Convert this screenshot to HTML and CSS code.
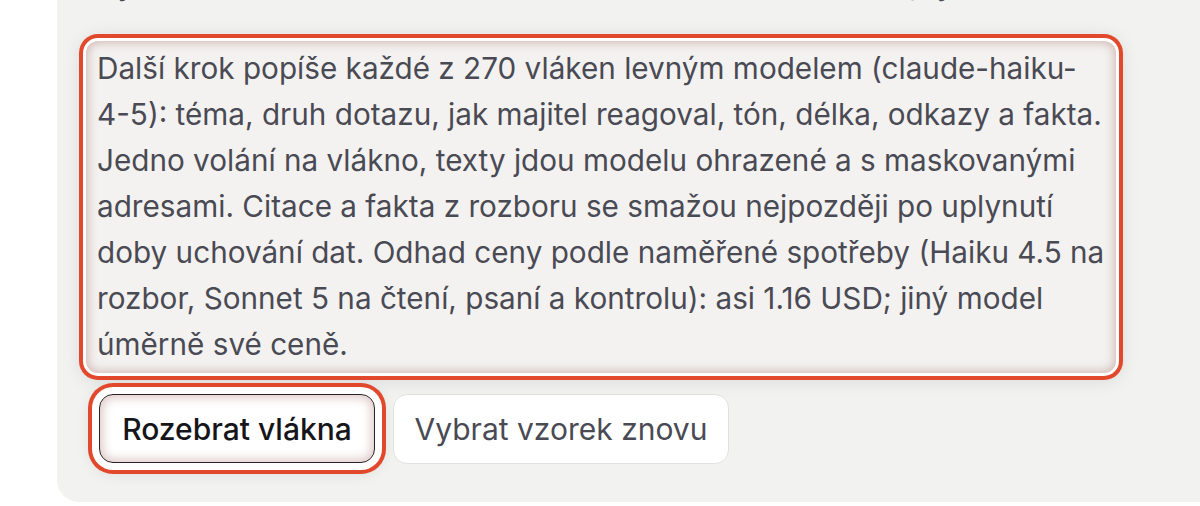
FILE: index.html
```html
<!DOCTYPE html>
<html lang="cs">
<head>
<meta charset="utf-8">
<title>Rozbor vláken</title>
<link rel="stylesheet" href="styles.css">
</head>
<body>
<main class="card">
  <p class="lead">Vybrán vzorek 270 vláken z 1 482 vláken v celé schránce, tyto se</p>
  <div class="note">Další krok popíše každé z 270 vláken levným modelem (claude-haiku-<span class="nowrap">4-5):</span> téma, druh dotazu, jak majitel reagoval, tón, délka, odkazy a fakta. Jedno volání na vlákno, texty jdou modelu ohrazené a s maskovanými adresami. Citace a fakta z rozboru se smažou nejpozději po uplynutí doby uchování dat. Odhad ceny podle naměřené spotřeby (Haiku 4.5 na rozbor, Sonnet 5 na čtení, psaní a kontrolu): asi 1.16 USD; jiný model úměrně své ceně.</div>
  <div class="actions">
    <button class="btn btn-primary" type="button">Rozebrat vlákna</button>
    <button class="btn btn-secondary" type="button">Vybrat vzorek znovu</button>
  </div>
</main>
</body>
</html>
```

FILE: styles.css
```css
html, body {
  margin: 0;
  padding: 0;
  background: #ffffff;
  overflow: hidden;
}

body {
  font-family: Inter, "Noto Sans", "Liberation Sans", sans-serif;
  color: #4a4a54;
}

.card {
  display: block;
  margin: -38px -60px 0 57px;
  padding: 0 0 38px 0;
  background: #f2f2f0;
  border-radius: 0 0 0 22px;
}

.lead {
  margin: 0 0 34px 40px;
  font-size: 30px;
  line-height: 45px;
  white-space: nowrap;
  color: #4a4a54;
}

.note {
  width: 1014px;
  margin-left: 29px;
  padding: 4px 5px 6px 11px;
  font-size: 29.7px;
  line-height: 46px;
  color: #4a4a54;
  background: #f3f2f0;
  border-radius: 12px;
  box-shadow:
    inset 0 0 10px 2px rgba(150, 80, 70, 0.34),
    0 0 0 3px #ffffff,
    0 0 0 7px #e2482c,
    0 2px 18px 6px rgba(0, 0, 0, 0.10);
}

.nowrap {
  white-space: nowrap;
}

.actions {
  display: flex;
  gap: 18px;
  margin: 21px 0 0 42px;
}

.btn {
  font-family: Inter, "Noto Sans", "Liberation Sans", sans-serif;
  font-size: 30px;
  line-height: 36px;
  height: 70px;
  padding: 0 20px;
  border-radius: 14px;
  cursor: pointer;
}

.btn-primary {
  width: 276px;
  height: 69px;
  font-weight: 500;
  color: #15151a;
  background: #ffffff;
  border: 1.5px solid #2a2224;
  box-shadow:
    inset 0 0 10px 3px rgba(150, 80, 75, 0.30),
    0 0 0 7px #ffffff,
    0 0 0 11px #e2482c,
    0 2px 14px 10px rgba(0, 0, 0, 0.08);
}

.btn-secondary {
  width: 336px;
  font-weight: 400;
  color: #4a4a54;
  background: #ffffff;
  border: 1px solid #e2e1de;
}
```
